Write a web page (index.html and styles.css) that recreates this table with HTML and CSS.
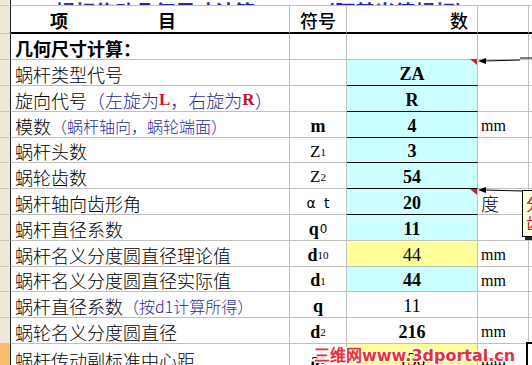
FILE: index.html
```html
<!DOCTYPE html>
<html lang="zh-CN">
<head>
<meta charset="utf-8">
<title>蜗杆传动几何尺寸计算</title>
<link rel="stylesheet" href="styles.css">
</head>
<body>
<div class="sheet">
  <div class="rh"></div>
  <div class="cell title"><div class="title-text">一、蜗杆传动几何尺寸计算&emsp;&emsp;&emsp;（阿基米德蜗杆）&emsp;&emsp;&emsp;计算</div></div>

  <div class="rh"></div>
  <div class="cell hd hd-a">项&#12288;&#12288;&#12288;&#12288;&#12288;目</div>
  <div class="cell hd hd-b">符号</div>
  <div class="cell hd hd-c">数</div>
  <div class="cell hd"></div>
  <div class="cell hd"></div>

  <div class="rh"></div>
  <div class="cell name bold">几何尺寸计算：</div>
  <div class="cell"></div>
  <div class="cell"></div>
  <div class="cell"></div>
  <div class="cell"></div>

  <div class="rh"></div>
  <div class="cell name">蜗杆类型代号</div>
  <div class="cell sym"></div>
  <div class="cell val cyan dark note">ZA</div>
  <div class="cell"></div>
  <div class="cell"></div>

  <div class="rh"></div>
  <div class="cell name">旋向代号<span class="navy">（左旋为</span><span class="red">L</span><span class="navy">，右旋为</span><span class="red">R</span><span class="navy">）</span></div>
  <div class="cell sym"></div>
  <div class="cell val cyan dark">R</div>
  <div class="cell"></div>
  <div class="cell"></div>

  <div class="rh"></div>
  <div class="cell name">模数<span class="navy small">（蜗杆轴向，蜗轮端面）</span></div>
  <div class="cell sym"><b>m</b></div>
  <div class="cell val cyan dark">4</div>
  <div class="cell unit">mm</div>
  <div class="cell"></div>

  <div class="rh"></div>
  <div class="cell name">蜗杆头数</div>
  <div class="cell sym">Z<sub>1</sub></div>
  <div class="cell val cyan dark">3</div>
  <div class="cell"></div>
  <div class="cell"></div>

  <div class="rh"></div>
  <div class="cell name">蜗轮齿数</div>
  <div class="cell sym">Z<sub>2</sub></div>
  <div class="cell val cyan dark">54</div>
  <div class="cell"></div>
  <div class="cell"></div>

  <div class="rh"></div>
  <div class="cell name">蜗杆轴向齿形角</div>
  <div class="cell sym alpha">α t</div>
  <div class="cell val cyan dark note">20</div>
  <div class="cell unit cjk">度</div>
  <div class="cell"></div>

  <div class="rh"></div>
  <div class="cell name">蜗杆直径系数</div>
  <div class="cell sym"><b>q</b><span class="idx">0</span></div>
  <div class="cell val cyan">11</div>
  <div class="cell"></div>
  <div class="cell"></div>

  <div class="rh"></div>
  <div class="cell name">蜗杆名义分度圆直径理论值</div>
  <div class="cell sym"><b>d</b><sub>10</sub></div>
  <div class="cell val yellow normal">44</div>
  <div class="cell unit">mm</div>
  <div class="cell"></div>

  <div class="rh"></div>
  <div class="cell name">蜗杆名义分度圆直径实际值</div>
  <div class="cell sym"><b>d</b><sub>1</sub></div>
  <div class="cell val cyan">44</div>
  <div class="cell unit">mm</div>
  <div class="cell"></div>

  <div class="rh"></div>
  <div class="cell name">蜗杆直径系数<span class="navy small">（按d1计算所得）</span></div>
  <div class="cell sym"><b>q</b></div>
  <div class="cell val normal">11</div>
  <div class="cell"></div>
  <div class="cell"></div>

  <div class="rh"></div>
  <div class="cell name">蜗轮名义分度圆直径</div>
  <div class="cell sym"><b>d</b><sub>2</sub></div>
  <div class="cell val">216</div>
  <div class="cell unit">mm</div>
  <div class="cell"></div>

  <div class="rh sel"></div>
  <div class="cell name">蜗杆传动副标准中心距</div>
  <div class="cell sym"><b>a</b><sub>0</sub></div>
  <div class="cell val yellow normal">130</div>
  <div class="cell unit">mm</div>
  <div class="cell"></div>
</div>

<svg class="arrows" width="532" height="365" viewBox="0 0 532 365">
  <polygon points="470,59 477,59 477,65" fill="#c0282e"/>
  <polygon points="470,189 477,189 477,195" fill="#c0282e"/>
  <line x1="484" y1="61" x2="520" y2="60" stroke="#000" stroke-width="1"/>
  <line x1="520" y1="58" x2="532" y2="58" stroke="#000" stroke-width="1"/>
  <polygon points="478,61 486,58 486,64" fill="#000"/>
  <line x1="484" y1="190" x2="522" y2="191" stroke="#000" stroke-width="1"/>
  <polygon points="478,190 486,187 486,193" fill="#000"/>
</svg>

<div class="comment c1"><span>分度</span><span>齿形</span></div>
<div class="comment c2"></div>

<div class="watermark">三维网www.3dportal.cn</div>
</body>
</html>
```

FILE: styles.css
```css
* { box-sizing: border-box; }
html, body {
  margin: 0;
  padding: 0;
  background: #fff;
  overflow: hidden;
  width: 532px;
  height: 365px;
}
.sheet {
  display: grid;
  grid-template-columns: 11px 279px 57px 131px 51px 40px;
  grid-template-rows: 6px 28px 26px 26px 26px 26px 25px 26px 26px 26px 26px 25px 26px 26px 30px;
  width: 595px;
  font-family: "Noto Sans CJK SC", sans-serif;
  font-size: 18px;
  font-weight: 300;
  color: #000;
}
.rh {
  background: #ece9d8;
  border-right: 1px solid #222;
  border-bottom: 1px solid #c9c5b3;
}
.rh.sel { background: #f9bd6b; }
.cell {
  border-right: 1px solid #c0c0c0;
  border-bottom: 1px solid #c0c0c0;
  display: flex;
  align-items: center;
  white-space: nowrap;
  line-height: 1;
  position: relative;
}
.title {
  grid-column: 2 / -1;
  overflow: hidden;
  align-items: flex-end;
  border-right: none;
}
.title-text {
  color: #2929a3;
  font-size: 20px;
  font-weight: 700;
  line-height: 20px;
  margin-bottom: -17px;
  padding-left: 4px;
}
.hd {
  border-bottom: 2px solid #000;
  font-weight: 700;
}
.hd-a { padding-left: 39px; padding-top: 2px; }
.hd-b { justify-content: center; padding-top: 2px; font-weight: 500; }
.hd-c { justify-content: flex-end; padding-right: 9px; padding-top: 2px; font-weight: 500; }
.name { padding-left: 4px; padding-top: 2px; }
.bold { font-weight: 700; }
.navy { color: #2b2b95; }
.small { font-size: 16px; }
.red {
  color: #c8102e;
  font-family: "Liberation Serif", serif;
  font-weight: 700;
  font-size: 17px;
}
.sym {
  justify-content: center;
  font-family: "Liberation Serif", serif;
  font-weight: 400;
  font-size: 17px;
  padding-top: 2px;
}
.sym b { font-size: 18px; }
.sym sub {
  font-size: 11px;
  vertical-align: baseline;
  position: relative;
  top: 1px;
}
.sym .idx {
  font-family: "DejaVu Sans", sans-serif;
  font-size: 12px;
  margin-left: 1px;
}
.alpha {
  font-family: "DejaVu Sans", sans-serif;
  font-size: 14px;
  word-spacing: 4px;
}
.val {
  justify-content: center;
  font-family: "Liberation Serif", serif;
  font-weight: 700;
  font-size: 18px;
  padding-top: 2px;
}
.val.normal { font-weight: 400; }
.cyan { background: #ccffff; }
.yellow { background: #ffff99; }
.dark { border-bottom-color: #000; }
.unit {
  font-family: "Liberation Serif", serif;
  font-weight: 400;
  font-size: 16px;
  padding-left: 3px;
  padding-top: 3px;
}
.unit.cjk {
  font-family: "Noto Sans CJK SC", sans-serif;
  font-weight: 300;
  font-size: 18px;
  padding-top: 2px;
}
.arrows {
  position: absolute;
  left: 0;
  top: 0;
  pointer-events: none;
}
.comment {
  position: absolute;
  background: #ffffe1;
  border: 1px solid #000;
  box-shadow: 3px 3px 0 #222;
  overflow: hidden;
}
.c1 {
  left: 522px;
  top: 190px;
  width: 40px;
  height: 47px;
  padding: 3px 0 0 3px;
  display: flex;
  flex-direction: column;
  font-family: "Noto Sans CJK SC", sans-serif;
  font-size: 16px;
  line-height: 19px;
  color: #b5241c;
}
.c2 {
  left: 526px;
  top: 342px;
  width: 40px;
  height: 40px;
  border-width: 2px;
  box-shadow: none;
  background: #fff;
}
.watermark {
  position: absolute;
  left: 314px;
  top: 342px;
  font-family: "DejaVu Sans", sans-serif;
  font-weight: 700;
  font-size: 16px;
  color: #e8303c;
  text-shadow: 1px 0 0 #fff, -1px 0 0 #fff, 0 1px 0 #fff, 0 -1px 0 #fff, 1px 1px 0 #fff, -1px -1px 0 #fff, 1px -1px 0 #fff, -1px 1px 0 #fff;
}
```
